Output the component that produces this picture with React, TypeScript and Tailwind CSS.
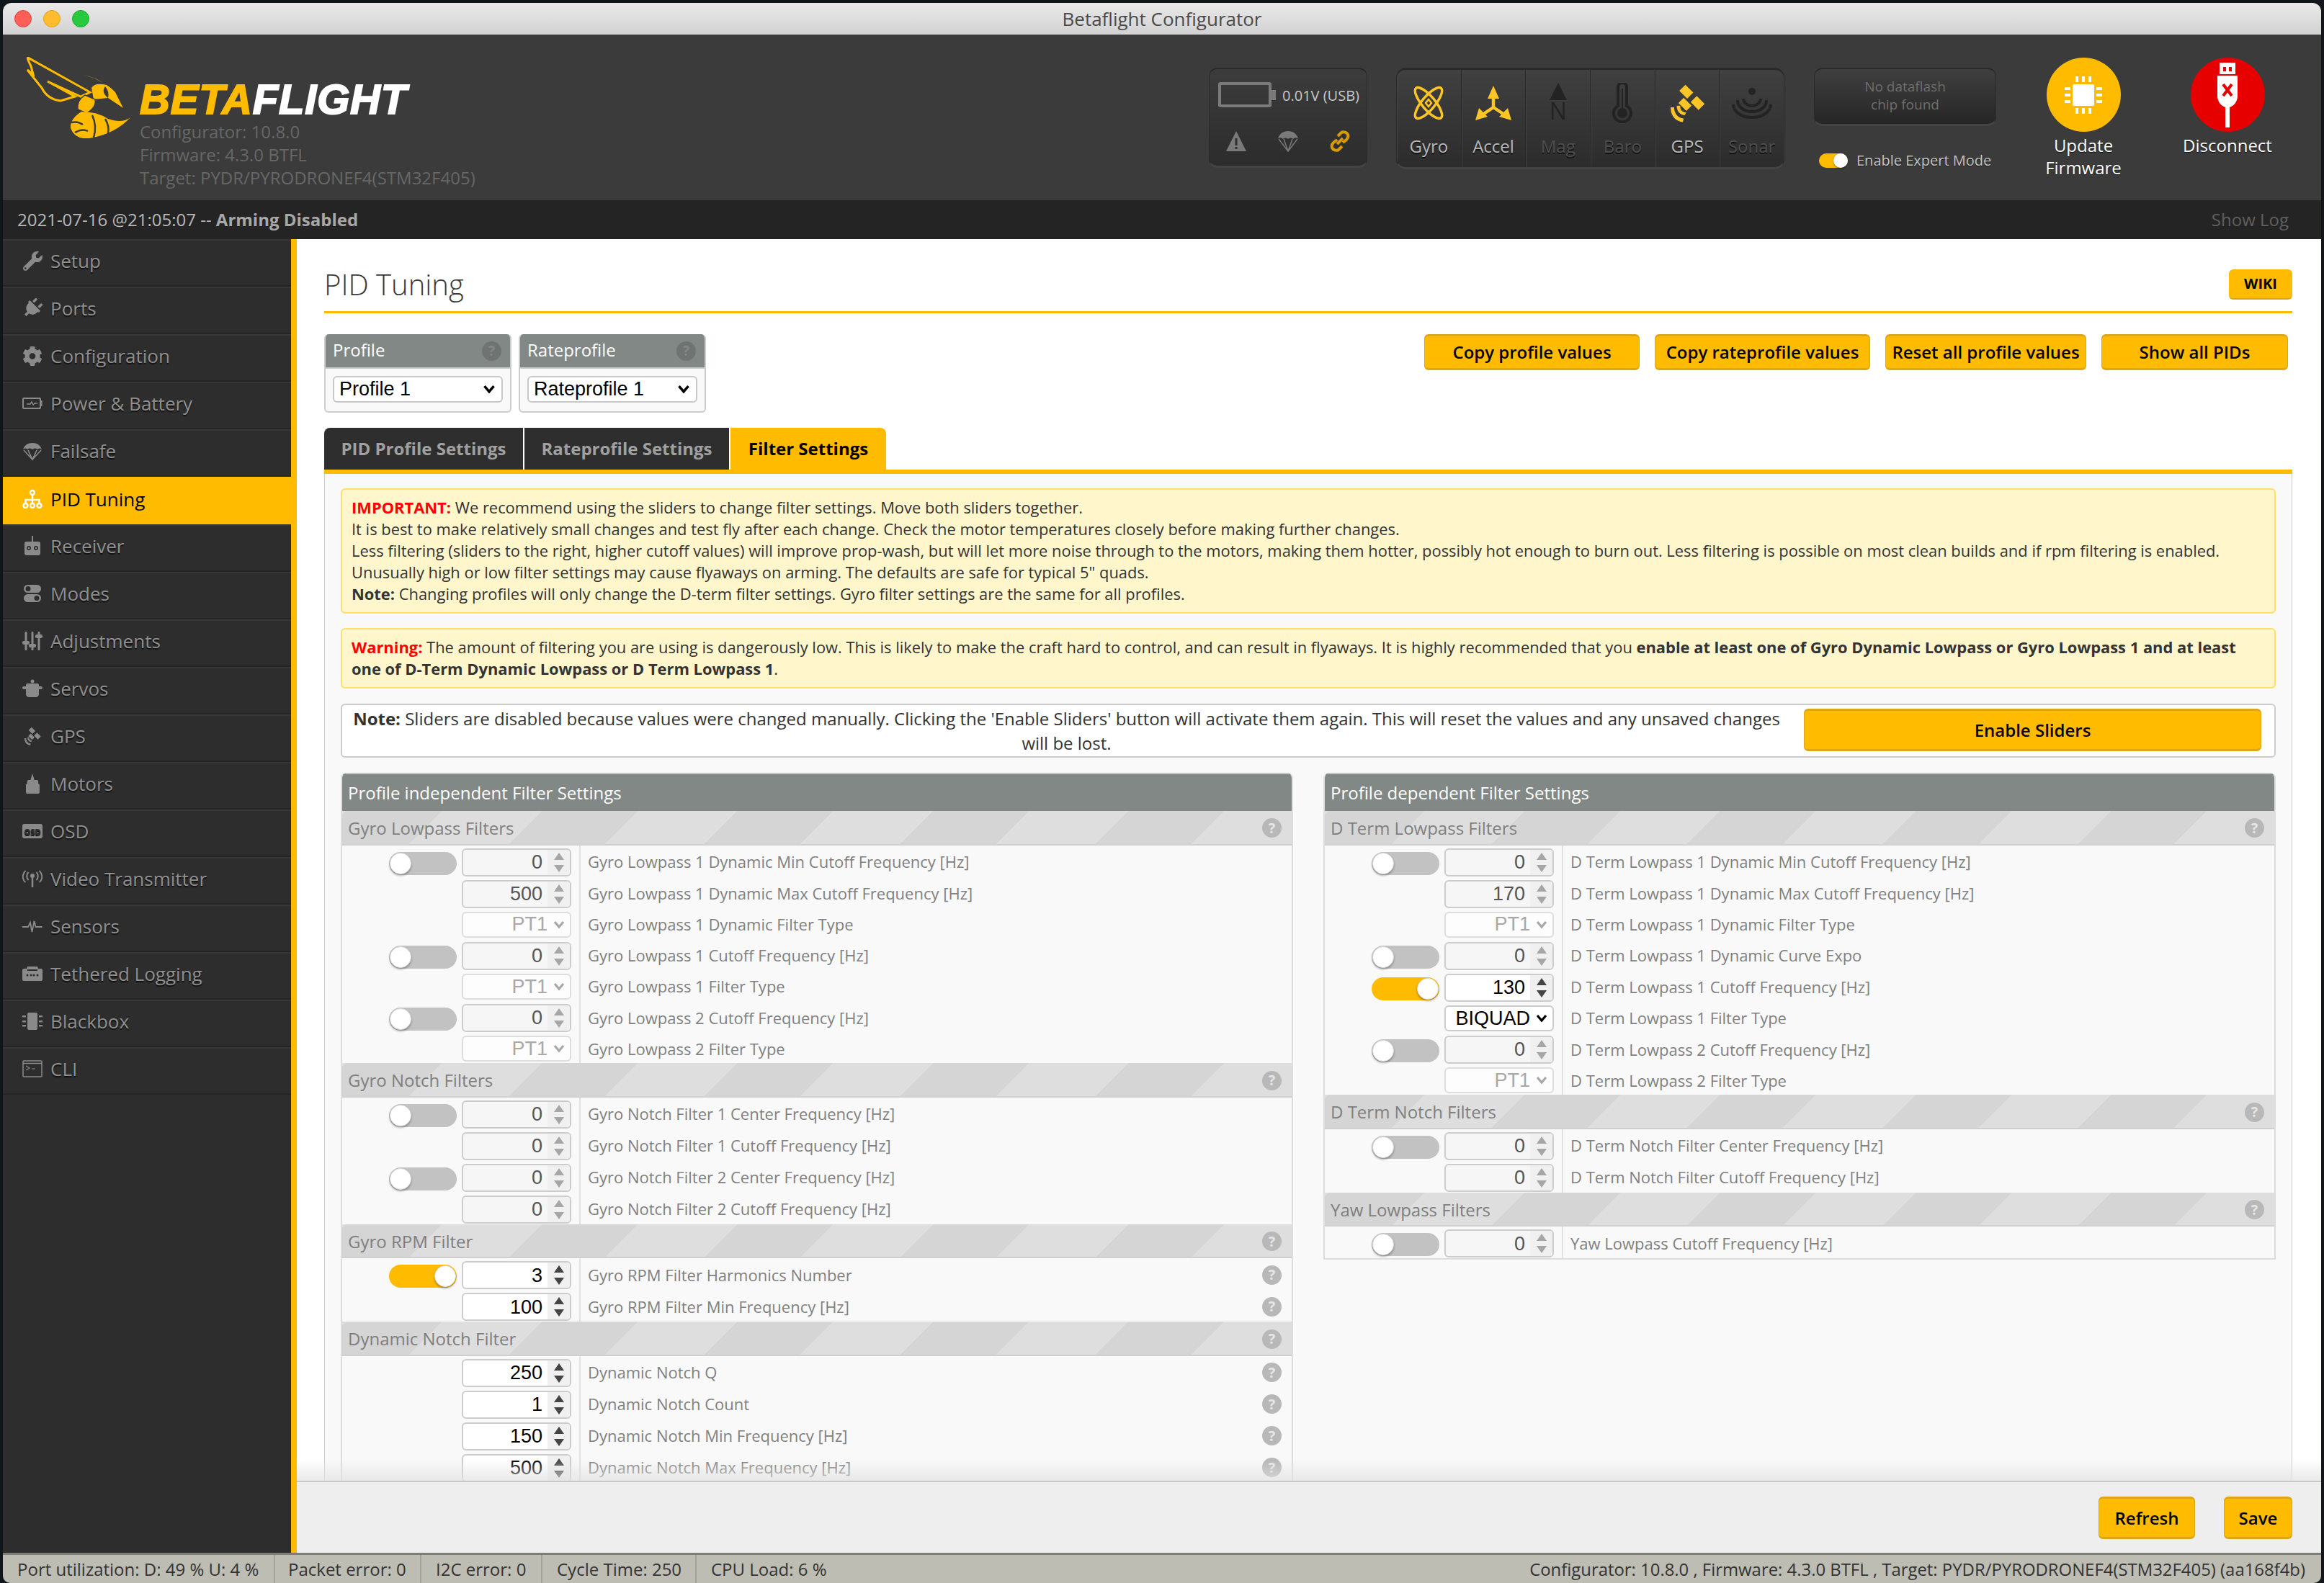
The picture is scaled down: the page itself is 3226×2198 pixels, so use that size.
import { FaWrench, FaPlug, FaCog } from "react-icons/fa";

type Row = {
  label: string;
  toggle?: "on" | "off";
  value?: string;
  select?: string;
  active?: boolean;
  help?: boolean;
};

type Section = { title: string; rows: Row[] };

const leftSections: Section[] = [
  {
    title: "Gyro Lowpass Filters",
    rows: [
      { label: "Gyro Lowpass 1 Dynamic Min Cutoff Frequency [Hz]", toggle: "off", value: "0" },
      { label: "Gyro Lowpass 1 Dynamic Max Cutoff Frequency [Hz]", value: "500" },
      { label: "Gyro Lowpass 1 Dynamic Filter Type", select: "PT1" },
      { label: "Gyro Lowpass 1 Cutoff Frequency [Hz]", toggle: "off", value: "0" },
      { label: "Gyro Lowpass 1 Filter Type", select: "PT1" },
      { label: "Gyro Lowpass 2 Cutoff Frequency [Hz]", toggle: "off", value: "0" },
      { label: "Gyro Lowpass 2 Filter Type", select: "PT1" },
    ],
  },
  {
    title: "Gyro Notch Filters",
    rows: [
      { label: "Gyro Notch Filter 1 Center Frequency [Hz]", toggle: "off", value: "0" },
      { label: "Gyro Notch Filter 1 Cutoff Frequency [Hz]", value: "0" },
      { label: "Gyro Notch Filter 2 Center Frequency [Hz]", toggle: "off", value: "0" },
      { label: "Gyro Notch Filter 2 Cutoff Frequency [Hz]", value: "0" },
    ],
  },
  {
    title: "Gyro RPM Filter",
    rows: [
      { label: "Gyro RPM Filter Harmonics Number", toggle: "on", value: "3", active: true, help: true },
      { label: "Gyro RPM Filter Min Frequency [Hz]", value: "100", active: true, help: true },
    ],
  },
  {
    title: "Dynamic Notch Filter",
    rows: [
      { label: "Dynamic Notch Q", value: "250", active: true, help: true },
      { label: "Dynamic Notch Count", value: "1", active: true, help: true },
      { label: "Dynamic Notch Min Frequency [Hz]", value: "150", active: true, help: true },
      { label: "Dynamic Notch Max Frequency [Hz]", value: "500", active: true, help: true },
    ],
  },
];

const rightSections: Section[] = [
  {
    title: "D Term Lowpass Filters",
    rows: [
      { label: "D Term Lowpass 1 Dynamic Min Cutoff Frequency [Hz]", toggle: "off", value: "0" },
      { label: "D Term Lowpass 1 Dynamic Max Cutoff Frequency [Hz]", value: "170" },
      { label: "D Term Lowpass 1 Dynamic Filter Type", select: "PT1" },
      { label: "D Term Lowpass 1 Dynamic Curve Expo", toggle: "off", value: "0" },
      { label: "D Term Lowpass 1 Cutoff Frequency [Hz]", toggle: "on", value: "130", active: true },
      { label: "D Term Lowpass 1 Filter Type", select: "BIQUAD", active: true },
      { label: "D Term Lowpass 2 Cutoff Frequency [Hz]", toggle: "off", value: "0" },
      { label: "D Term Lowpass 2 Filter Type", select: "PT1" },
    ],
  },
  {
    title: "D Term Notch Filters",
    rows: [
      { label: "D Term Notch Filter Center Frequency [Hz]", toggle: "off", value: "0" },
      { label: "D Term Notch Filter Cutoff Frequency [Hz]", value: "0" },
    ],
  },
  {
    title: "Yaw Lowpass Filters",
    rows: [{ label: "Yaw Lowpass Cutoff Frequency [Hz]", toggle: "off", value: "0" }],
  },
];

const SatelliteIcon = ({ className }: { className?: string }) => (
  <svg viewBox="0 0 48 48" className={className} fill="currentColor">
    <path d="M21 3l9 9-7 7-9-9zM34 16l9 9-7 7-9-9z" transform="translate(1 0)" />
    <path d="M20 18l9 9-6 6-9-9z" />
    <path d="M16 27c0 5 2 7 7 8l-2 3c-6-1-9-5-9-11z" />
    <path d="M9 29c0 7 4 12 11 13l-1 4C10 45 5 38 5 29z" />
  </svg>
);

const icons: Record<string, React.ReactNode> = {
  Setup: <FaWrench className="w-[27px] h-[27px]" />,
  Ports: <FaPlug className="w-[28px] h-[28px] rotate-45" />,
  Configuration: <FaCog className="w-[29px] h-[29px]" />,
  "Power & Battery": (
    <svg viewBox="0 0 28 28" className="w-[28px] h-[28px]" fill="none" stroke="currentColor">
      <rect x="1" y="7" width="24" height="14" strokeWidth="2" rx="1" />
      <rect x="25" y="10" width="2.5" height="8" fill="currentColor" stroke="none" />
      <path d="M6 15h5l2-3 2 4 2-2h4" strokeWidth="1.4" />
    </svg>
  ),
  Failsafe: (
    <svg viewBox="0 0 28 28" className="w-[28px] h-[28px]" fill="currentColor">
      <path d="M1 12C3 6 8 3 14 3s11 3 13 9c-2-2-4-2-6 0-2-2-4-2-7 0-3-2-5-2-7 0-2-2-4-2-6 0z" />
      <path d="M2 13l12 13L26 13M8 13l6 13 6-13" fill="none" stroke="currentColor" strokeWidth="1.6" />
    </svg>
  ),
  "PID Tuning": (
    <svg viewBox="0 0 28 28" className="w-[28px] h-[28px]" fill="none" stroke="currentColor" strokeWidth="2.4">
      <circle cx="14" cy="5" r="3" />
      <circle cx="4.5" cy="23" r="3" />
      <circle cx="14" cy="23" r="3" />
      <circle cx="23.5" cy="23" r="3" />
      <path d="M14 8v12M4.5 20v-5h19v5" />
    </svg>
  ),
  Receiver: (
    <svg viewBox="0 0 28 28" className="w-[28px] h-[28px]" fill="currentColor">
      <path d="M13 0h2v8h7a3 3 0 013 3v13a3 3 0 01-3 3H6a3 3 0 01-3-3V11a3 3 0 013-3h7z" />
      <circle cx="9" cy="17" r="3" fill="#2d2d2d" />
      <circle cx="19" cy="17" r="3" fill="#2d2d2d" />
      <circle cx="9" cy="17" r="1.3" />
      <circle cx="19" cy="17" r="1.3" />
    </svg>
  ),
  Modes: (
    <svg viewBox="0 0 28 28" className="w-[28px] h-[28px]" fill="currentColor">
      <rect x="2" y="2" width="24" height="11" rx="5.5" />
      <rect x="2" y="15" width="24" height="11" rx="5.5" />
      <circle cx="8" cy="7.5" r="3.5" fill="#2d2d2d" />
      <circle cx="20" cy="20.5" r="3.5" fill="#2d2d2d" />
    </svg>
  ),
  Adjustments: (
    <svg viewBox="0 0 28 28" className="w-[28px] h-[28px]" fill="currentColor">
      <rect x="3.5" y="1" width="3" height="26" rx="1" />
      <rect x="12.5" y="1" width="3" height="26" rx="1" />
      <rect x="21.5" y="1" width="3" height="26" rx="1" />
      <rect x="0" y="14" width="10" height="5" rx="2" />
      <rect x="9" y="18" width="10" height="5" rx="2" />
      <rect x="18" y="5" width="10" height="5" rx="2" />
    </svg>
  ),
  Servos: (
    <svg viewBox="0 0 28 28" className="w-[28px] h-[28px]" fill="currentColor">
      <rect x="0" y="11" width="28" height="4" rx="2" />
      <path d="M5 9c0-1 1-2 2-2h14c1 0 2 1 2 2v13c0 2-2 4-4 4H9c-2 0-4-2-4-4z" />
      <circle cx="14" cy="4" r="2.5" />
    </svg>
  ),
  GPS: <SatelliteIcon className="w-[28px] h-[28px]" />,
  Motors: (
    <svg viewBox="0 0 28 28" className="w-[28px] h-[28px]" fill="currentColor">
      <path d="M14 0l3 9h4a2 2 0 012 2v3l2 1v11a2 2 0 01-2 2H6a2 2 0 01-2-2V15l2-1v-3a2 2 0 012-2h3z" transform="translate(1.4 0) scale(0.9 1)" />
    </svg>
  ),
  OSD: (
    <svg viewBox="0 0 28 20" className="w-[28px] h-[20px]">
      <rect x="0" y="0" width="28" height="20" rx="3" fill="currentColor" />
      <text x="14" y="14.5" textAnchor="middle" fontSize="11" fontWeight="800" fill="#2d2d2d" fontFamily="Open Sans, sans-serif">
        OSD
      </text>
    </svg>
  ),
  "Video Transmitter": (
    <svg viewBox="0 0 28 28" className="w-[28px] h-[28px]" fill="none" stroke="currentColor" strokeWidth="2">
      <path d="M14 11v15" strokeWidth="2.6" />
      <circle cx="14" cy="10" r="3" fill="currentColor" stroke="none" />
      <path d="M8.5 5c-3 3-3 8 0 11M19.5 5c3 3 3 8 0 11M4.5 3c-5 5-5 12 0 16M23.5 3c5 5 5 12 0 16" />
    </svg>
  ),
  Sensors: (
    <svg viewBox="0 0 28 28" className="w-[28px] h-[28px]" fill="none" stroke="currentColor" strokeWidth="1.8">
      <path d="M0 15h8l3-6 2.5 13 3-15 2 8h9" />
    </svg>
  ),
  "Tethered Logging": (
    <svg viewBox="0 0 28 20" className="w-[28px] h-[20px]" fill="currentColor">
      <path d="M0 5a2 2 0 012-2h4l1-3h14l1 3h4a2 2 0 012 2v13a2 2 0 01-2 2H2a2 2 0 01-2-2z" />
      <rect x="7" y="4" width="14" height="2" fill="#2d2d2d" />
      <circle cx="7" cy="12" r="1.5" fill="#2d2d2d" />
      <circle cx="12" cy="12" r="1.5" fill="#2d2d2d" />
      <circle cx="16" cy="12" r="1.5" fill="#2d2d2d" />
      <circle cx="21" cy="12" r="1.5" fill="#2d2d2d" />
    </svg>
  ),
  Blackbox: (
    <svg viewBox="0 0 28 24" className="w-[28px] h-[24px]" fill="currentColor">
      <path d="M7 2a2 2 0 012-2h10a2 2 0 012 2v20a2 2 0 01-2 2H9a2 2 0 01-2-2z" />
      <rect x="0" y="4" width="5" height="2.4" />
      <rect x="0" y="11" width="5" height="2.4" />
      <rect x="0" y="17" width="5" height="2.4" />
      <rect x="23" y="4" width="5" height="2.4" />
      <rect x="23" y="11" width="5" height="2.4" />
      <rect x="23" y="17" width="5" height="2.4" />
    </svg>
  ),
  CLI: (
    <svg viewBox="0 0 28 24" className="w-[28px] h-[24px]" fill="none" stroke="currentColor" strokeWidth="1.5">
      <rect x="1" y="1" width="26" height="22" rx="1" />
      <path d="M1 4.5h26" />
      <path d="M5 8l5 3-5 3M13 12h5" strokeWidth="1.2" />
    </svg>
  ),
};

const navItems = [
  "Setup",
  "Ports",
  "Configuration",
  "Power & Battery",
  "Failsafe",
  "PID Tuning",
  "Receiver",
  "Modes",
  "Adjustments",
  "Servos",
  "GPS",
  "Motors",
  "OSD",
  "Video Transmitter",
  "Sensors",
  "Tethered Logging",
  "Blackbox",
  "CLI",
];

const Help = ({ dark }: { dark?: boolean }) => (
  <span
    className={`flex items-center justify-center w-[27px] h-[27px] rounded-full text-[20px] font-bold shrink-0 ${
      dark ? "bg-[#6f7371] text-[#828885]" : "bg-[#b8b8b8] text-[#e6e6e6]"
    }`}
  >
    ?
  </span>
);

const Chevron = ({ className }: { className?: string }) => (
  <svg viewBox="0 0 16 12" className={className} fill="none" stroke="currentColor" strokeWidth="3.2">
    <path d="M2 2l6 7 6-7" />
  </svg>
);

const Toggle = ({ on, small }: { on?: boolean; small?: boolean }) =>
  small ? (
    <div className="relative w-[40px] h-[20px] rounded-full bg-[#ffbb00]">
      <div className="absolute right-0 top-0 w-[20px] h-[20px] rounded-full bg-white shadow-[0_1px_2px_rgba(0,0,0,0.5)]" />
    </div>
  ) : (
    <div
      className={`flex items-center w-[94px] h-[32px] rounded-full px-[1px] ${
        on ? "bg-[#ffbb00] justify-end" : "bg-[#c2c2c2] justify-start"
      }`}
    >
      <div className="w-[30px] h-[30px] rounded-full bg-white border border-[#dcdcdc] shadow-[0_2px_3px_rgba(0,0,0,0.3)]" />
    </div>
  );

const NumberInput = ({ value, active }: { value: string; active?: boolean }) => (
  <div
    className={`flex w-[152px] h-[39px] rounded-[6px] border-2 border-[#cccccc] overflow-hidden font-['Liberation_Sans',sans-serif] ${
      active ? "bg-white text-black" : "bg-[#f6f6f6] text-[#555555]"
    }`}
  >
    <div className="flex-1 flex items-center justify-end pr-[7px] text-[27px]">{value}</div>
    <div className={`w-[31px] bg-[#f0f0f0] flex flex-col items-center justify-center gap-[7px] ${active ? "text-[#444444]" : "text-[#a6a6a6]"}`}>
      <svg viewBox="0 0 14 10" className="w-[14px] h-[10px]" fill="currentColor">
        <path d="M7 0l7 10H0z" />
      </svg>
      <svg viewBox="0 0 14 10" className="w-[14px] h-[10px]" fill="currentColor">
        <path d="M0 0h14L7 10z" />
      </svg>
    </div>
  </div>
);

const SelectBox = ({ value, active }: { value: string; active?: boolean }) => (
  <div
    className={`flex items-center justify-end gap-[8px] w-[152px] h-[36px] rounded-[6px] border-2 pr-[7px] font-['Liberation_Sans',sans-serif] text-[27px] ${
      active ? "bg-white text-black border-[#cccccc]" : "bg-[#fdfdfd] text-[#a8a8a8] border-[#dddddd]"
    }`}
  >
    <span>{value}</span>
    <Chevron className="w-[16px] h-[12px]" />
  </div>
);

const FilterRow = ({ row }: { row: Row }) => (
  <div className={`flex ${row.select ? "h-[42.33px]" : "h-[44px]"}`}>
    <div className="flex justify-end gap-[7px] w-[331px] pr-[11px] pt-[4px] border-r-2 border-[#e2e2e2] shrink-0">
      {row.toggle && (
        <div className="pt-[5px]">
          <Toggle on={row.toggle === "on"} />
        </div>
      )}
      {row.select ? <SelectBox value={row.select} active={row.active} /> : <NumberInput value={row.value ?? ""} active={row.active} />}
    </div>
    <div className="flex-1 flex items-center justify-between pl-[10px] pr-[14px] pt-[2px] text-[22px] text-[#808080]">
      <span>{row.label}</span>
      {row.help && <Help />}
    </div>
  </div>
);

const SubHeader = ({ title }: { title: string }) => (
  <div className="flex items-center justify-between h-[47.5px] pl-[8px] pr-[14px] pt-[2px] border-b-2 border-[#cfcfcf] text-[24px] text-[#7f7f7f] bg-[repeating-linear-gradient(135deg,#dedede_0px,#dedede_4px,#d5d5d5_4px,#d5d5d5_98px,#dedede_98px,#dedede_192px)]">
    <span>{title}</span>
    <Help />
  </div>
);

const FilterPanel = ({ title, sections }: { title: string; sections: Section[] }) => (
  <div className="rounded-t-[8px] overflow-hidden border-x-2 border-b-2 border-[#dddddd] bg-[#f9f9f9] self-start">
    <div className="flex items-center h-[53px] -mx-[2px] pl-[10px] bg-[#828885] border-t-2 border-[#c4c7c5] text-[24px] text-white">{title}</div>
    {sections.map((s) => (
      <div key={s.title}>
        <SubHeader title={s.title} />
        {s.rows.map((r) => (
          <FilterRow key={r.label} row={r} />
        ))}
      </div>
    ))}
  </div>
);

const ActionButton = ({ label, className }: { label: string; className: string }) => (
  <button className={`flex items-center justify-center rounded-[6px] bg-[#ffbb00] border border-[#dba718] border-y-[3px] font-semibold text-[24px] text-black ${className}`}>
    {label}
  </button>
);

const ProfileBox = ({ title, value, className }: { title: string; value: string; className: string }) => (
  <div className={`rounded-[6px] overflow-hidden border-2 border-t-0 border-[#cccccc] bg-[#f9f9f9] h-[109px] ${className}`}>
    <div className="flex items-center justify-between h-[46px] -mx-[2px] pl-[12px] pr-[14px] bg-[#828885] border-b-2 border-[#c8c8c8] box-content text-[24px] text-white">
      <span className="-mt-[3px]">{title}</span>
      <Help dark />
    </div>
    <div className="px-[10px] pt-[10px]">
      <div className="flex items-center justify-between h-[37px] rounded-[6px] border-2 border-[#c8c8c8] bg-white pl-[7px] pr-[8px] font-['Liberation_Sans',sans-serif] text-[27px] text-black">
        <span>{value}</span>
        <Chevron className="w-[18px] h-[13px]" />
      </div>
    </div>
  </div>
);

const Sensor = ({ label, on, children }: { label: string; on?: boolean; children: React.ReactNode }) => (
  <div className="flex-1 flex flex-col items-center border-r border-[#262626] last:border-r-0 shadow-[inset_1px_0_0_#444444]">
    <div className="h-[88px] flex items-center justify-center pt-[4px]">{children}</div>
    <span className={`text-[24px] [text-shadow:0_2px_0_#111111] ${on ? "text-[#b8b8b8]" : "text-[#4e4e4e]"}`}>{label}</span>
  </div>
);

const Wasp = () => (
  <svg viewBox="37 79 144 113" className="w-[144px] h-[113px] shrink-0">
    <path d="M37 79L125 128L112 134L66 113L104 134L84 140Q66 138 58 122L38 97L46 103L43 92Z" fill="none" stroke="#ffbb00" strokeWidth="3" strokeLinejoin="miter" />
    <path d="M116 104Q145 112 160 128L171 150L150 136Q152 127 146 120Q140 128 150 136L130 138L127 122Q132 114 148 118Q134 108 116 104Z" fill="#ffbb00" />
    <path d="M118 132Q106 140 108 152L120 157Q134 150 132 138Z" fill="#ffbb00" stroke="#3a3b3a" strokeWidth="1.5" />
    <path d="M113 155Q97 165 98 178Q104 194 124 192Q160 186 181 163Q170 172 150 165Q135 155 113 155Z" fill="#ffbb00" />
    <path d="M99 170Q108 168 115 173M104 184Q114 178 122 182M128 160Q135 175 130 191M146 165Q152 175 150 185" fill="none" stroke="#3a3b3a" strokeWidth="2.5" />
  </svg>
);

const App = () => {
  return (
    <div className="w-[3226px] h-[2198px] overflow-hidden bg-[#11151c] pt-[4px] px-[4px] font-['Open_Sans',sans-serif]">
      <div className="flex flex-col h-full rounded-t-[12px] rounded-b-[10px] overflow-hidden">
        {/* title bar */}
        <div className="flex items-center justify-center h-[44px] shrink-0 relative bg-[linear-gradient(#e9e9e9,#d2d2d2)] text-[26px] text-[#4a4a4a]">
          <div className="absolute left-[16px] top-[10px] flex gap-[16px]">
            <span className="w-[24px] h-[24px] rounded-full bg-[#ff5f57] border border-[#e0443e]" />
            <span className="w-[24px] h-[24px] rounded-full bg-[#ffbd2e] border border-[#dea123]" />
            <span className="w-[24px] h-[24px] rounded-full bg-[#27c93f] border border-[#1aab29]" />
          </div>
          Betaflight Configurator
        </div>

        {/* header */}
        <div className="flex h-[230px] shrink-0 bg-[#3a3b3a]">
          <div className="flex gap-[13px] pl-[33px] pt-[31px]">
            <Wasp />
            <div className="pt-[34px]">
              <div className="h-[50px] leading-[50px] font-['Liberation_Sans',sans-serif] font-bold italic text-[58px] tracking-[0.8px] [-webkit-text-stroke:2px_currentColor]">
                <span className="text-[#ffbb00]">BETA</span>
                <span className="text-white">FLIGHT</span>
              </div>
              <div className="pt-[4px] text-[24px] leading-[32px] text-[#676767]">
                <div>Configurator: 10.8.0</div>
                <div>Firmware: 4.3.0 BTFL</div>
                <div>Target: PYDR/PYRODRONEF4(STM32F405)</div>
              </div>
            </div>
          </div>

          <div className="ml-auto flex pr-[65px]">
            <div className="w-[220px] h-[139px] mt-[46px] rounded-[12px] border-t-[2px] border-b-[3px] border-x border-[#2a2a2a] border-b-[#444444] overflow-hidden bg-[linear-gradient(#3c3c3c,#2c2c2c)]">
              <div className="flex items-center h-[71px] pl-[12px] gap-[11px]">
                <div className="flex items-center">
                  <div className="w-[74px] h-[35px] rounded-[3px] border-[4px] border-[#7a7a7a]" />
                  <div className="w-[6px] h-[14px] bg-[#7a7a7a]" />
                </div>
                <span className="text-[20px] text-[#c8c8c8] whitespace-nowrap -ml-[2px] pt-[2px]">0.01V (USB)</span>
              </div>
              <div className="flex items-center justify-between pl-[22px] pr-[22px] pt-[14px]">
                <svg viewBox="0 0 30 30" className="w-[30px] h-[30px]">
                  <path d="M15 1l14 28H1z" fill="#7a7a7a" />
                  <path d="M13.5 11h3v10h-3zM13.5 23h3v3h-3z" fill="#2f2f2f" />
                </svg>
                <svg viewBox="0 0 30 30" className="w-[30px] h-[30px] text-[#7a7a7a]" fill="currentColor">
                  <path d="M1 11C3 5 8 1 15 1s12 4 14 10c-3-1-5-1-7 1-2-2-5-2-7 0-2-2-5-2-7 0-2-2-4-2-7-1z" />
                  <path d="M2 12l13 17 13-17M9 12l6 17 6-17" fill="none" stroke="currentColor" strokeWidth="1.5" />
                </svg>
                <svg viewBox="0 0 30 30" className="w-[30px] h-[30px]" fill="none" stroke="#d59b00" strokeWidth="4">
                  <path d="M12 8l5-5c3-2 8 0 9 3s0 5-2 7l-5 4M18 22l-5 5c-3 2-8 0-9-3s0-5 2-7l5-4M11 19l8-8" />
                </svg>
              </div>
            </div>

            <div className="flex w-[539px] h-[141px] mt-[46px] ml-[40px] rounded-[14px] border-t-[3px] border-b-[3px] border-x border-[#2a2a2a] border-b-[#444444] overflow-hidden bg-[linear-gradient(#404040,#2c2c2c)]">
              <Sensor label="Gyro" on>
                <svg viewBox="-1 -1 48 48" className="w-[48px] h-[48px]" fill="none" stroke="#ffc526" strokeWidth="3.5">
                  <ellipse cx="23" cy="23" rx="9" ry="27" transform="rotate(40 23 23)" />
                  <ellipse cx="23" cy="23" rx="9" ry="27" transform="rotate(-40 23 23)" />
                  <path d="M23 18l4 5-4 5-4-5z" strokeWidth="2.5" />
                </svg>
              </Sensor>
              <Sensor label="Accel" on>
                <svg viewBox="0 0 54 48" className="w-[54px] h-[48px]" fill="#ffc526">
                  <path d="M27 0l8 18H19z" />
                  <path d="M2 48l5-17 12 12zM52 48l-5-17-12 12z" />
                  <path d="M27 14v16L12 40M27 30l15 10" fill="none" stroke="#ffc526" strokeWidth="4.5" />
                </svg>
              </Sensor>
              <Sensor label="Mag">
                <div className="flex flex-col items-center text-[#232323]">
                  <svg viewBox="0 0 24 24" className="w-[24px] h-[24px]" fill="currentColor">
                    <path d="M12 0l12 24H0z" />
                  </svg>
                  <span className="text-[32px] leading-[34px] -mt-[2px]">N</span>
                </div>
              </Sensor>
              <Sensor label="Baro">
                <svg viewBox="0 0 30 56" className="w-[30px] h-[56px]" fill="none" stroke="#232323" strokeWidth="4">
                  <path d="M9 6a6 6 0 0112 0v26a12 12 0 11-12 0z" />
                  <circle cx="15" cy="42" r="5" fill="#232323" />
                  <path d="M15 8v30" strokeWidth="2" />
                </svg>
              </Sensor>
              <Sensor label="GPS" on>
                <SatelliteIcon className="w-[58px] h-[58px] text-[#ffc526]" />
              </Sensor>
              <Sensor label="Sonar">
                <svg viewBox="0 0 56 44" className="w-[56px] h-[44px]" fill="none" stroke="#232323" strokeWidth="4">
                  <circle cx="28" cy="6" r="5" fill="#232323" stroke="none" />
                  <path d="M16 16c0 5 5 10 12 10s12-5 12-10M8 18c0 9 8 16 20 16s20-7 20-16M2 24c0 10 11 18 26 18s26-8 26-18" />
                </svg>
              </Sensor>
            </div>

            <div className="w-[253px] ml-[41px] mt-[46px]">
              <div className="flex items-center justify-center h-[81px] pb-[2px] rounded-[12px] border-t-[2px] border-b-[3px] border-x border-[#2a2a2a] border-b-[#444444] bg-[linear-gradient(#3f3f3f,#262626)] text-center text-[19px] leading-[25px] text-[#6e6e6e]">
                <div>
                  No dataflash
                  <br />
                  chip found
                </div>
              </div>
              <div className="flex items-center gap-[12px] pl-[7px] pt-[33px]">
                <Toggle on small />
                <span className="text-[20px] text-[#c4c4c4] whitespace-nowrap [text-shadow:0_1px_0_#111111]">Enable Expert Mode</span>
              </div>
            </div>

            <div className="flex flex-col items-center w-[130px] ml-[56px] pt-[32px]">
              <div className="flex items-center justify-center w-[103px] h-[103px] rounded-full bg-[#ffbb00]">
                <svg viewBox="0 0 56 56" className="w-[56px] h-[56px]" fill="white">
                  <rect x="13" y="13" width="30" height="30" rx="2" />
                  <path d="M17 2h4v8h-4zM26 2h4v8h-4zM35 2h4v8h-4zM17 46h4v8h-4zM26 46h4v8h-4zM35 46h4v8h-4zM2 17h8v4H2zM2 26h8v4H2zM2 35h8v4H2zM46 17h8v4h-8zM46 26h8v4h-8zM46 35h8v4h-8z" />
                </svg>
              </div>
              <div className="pt-[3px] text-center text-[24px] leading-[31px] text-white [text-shadow:0_1px_1px_#111111]">
                Update
                <br />
                Firmware
              </div>
            </div>

            <div className="flex flex-col items-center w-[130px] ml-[70px] pt-[32px]">
              <div className="flex items-center justify-center w-[103px] h-[103px] rounded-full bg-[#e60000]">
                <svg viewBox="0 0 40 90" className="w-[40px] h-[90px]" fill="white">
                  <path d="M9 0h22v18h3v28c0 8-5 14-11 16v28h-6V62C11 60 6 54 6 46V18h3z" />
                  <rect x="14" y="6" width="4" height="6" fill="#e60000" />
                  <rect x="22" y="6" width="4" height="6" fill="#e60000" />
                  <rect x="9" y="16" width="22" height="2" fill="#e60000" />
                  <path d="M14 30l12 16M26 30L14 46" stroke="#e60000" strokeWidth="4" />
                </svg>
              </div>
              <div className="pt-[3px] text-center text-[24px] leading-[31px] text-white [text-shadow:0_1px_1px_#111111]">Disconnect</div>
            </div>
          </div>
        </div>

        {/* log bar */}
        <div className="flex items-center justify-between h-[54px] shrink-0 pl-[20px] pr-[45px] bg-[#242424] text-[24px] text-[#b8b8b8]">
          <span>
            2021-07-16 @21:05:07 -- <b className="font-bold text-[#a8a8a8]">Arming Disabled</b>
          </span>
          <span className="text-[#5f5f5f]">Show Log</span>
        </div>

        <div className="flex flex-1 min-h-0">
          {/* sidebar */}
          <div className="w-[408px] shrink-0 bg-[#2d2d2d] border-r-[8px] border-[#ffbb00]">
            {navItems.map((name) => {
              const active = name === "PID Tuning";
              return (
                <div
                  key={name}
                  className={`flex items-center gap-[11px] h-[66px] pl-[27px] pb-[4px] ${
                    active
                      ? "bg-[#ffbb00] text-black"
                      : "border-b-2 border-[#242424] shadow-[inset_0_2px_0_#383838] text-[#8f8f8f] [text-shadow:0_2px_1px_#111111]"
                  } ${name === "CLI" ? "border-b-0 h-[60px]" : ""}`}
                >
                  <span className={`flex items-center justify-center w-[28px] h-[28px] ${active ? "text-white" : "text-[#8a8a8a]"}`}>{icons[name]}</span>
                  <span className="text-[26px]">{name}</span>
                </div>
              );
            })}
          </div>

          {/* tab */}
          <div className="flex-1 min-w-0 flex flex-col bg-white">
            <div className="relative flex-1 min-h-0 overflow-hidden pl-[38px] pr-[40px]">
              <div className="flex items-end justify-between h-[103px] pb-[16px] border-b-[3px] border-[#ffbb00]">
                <h1 className="text-[40px] leading-[54px] font-light text-[#3a3a3a] -mb-[6px]">PID Tuning</h1>
                <button className="flex items-center justify-center w-[88px] h-[42px] rounded-[6px] bg-[#ffbb00] border-b-2 border-[#dba718] text-[20px] font-bold text-black">WIKI</button>
              </div>

              <div className="flex justify-between pt-[29px] pr-[6px]">
                <div className="flex gap-[10px]">
                  <ProfileBox title="Profile" value="Profile 1" className="w-[260px]" />
                  <ProfileBox title="Rateprofile" value="Rateprofile 1" className="w-[260px]" />
                </div>
                <div className="flex gap-[21px] h-[50px]">
                  <ActionButton label="Copy profile values" className="w-[299px]" />
                  <ActionButton label="Copy rateprofile values" className="w-[299px]" />
                  <ActionButton label="Reset all profile values" className="w-[279px]" />
                  <ActionButton label="Show all PIDs" className="w-[259px]" />
                </div>
              </div>

              <div className="flex items-end gap-[2px] mt-[21px] h-[64px] border-b-[6px] border-[#ffbb00] text-[24px] font-bold">
                <div className="flex items-center justify-center w-[276px] h-[58px] rounded-tl-[8px] bg-[#2e2e2e] text-[#a0a0a0]">PID Profile Settings</div>
                <div className="flex items-center justify-center w-[284px] h-[58px] bg-[#2e2e2e] text-[#a0a0a0]">Rateprofile Settings</div>
                <div className="flex items-center justify-center w-[216px] h-[58px] rounded-tr-[8px] bg-[#ffbb00] text-black">Filter Settings</div>
              </div>

              <div className="px-[22px] pt-[20px] bg-[#f9f9f9] border-x border-[#cccccc] h-[1500px]">
                <div className="h-[174px] rounded-[6px] border-2 border-[#ffe066] bg-[#fff6cc] px-[13px] pt-[10px] text-[21.9px] leading-[30px] text-[#333333]">
                  <b className="font-bold text-[#ff0000]">IMPORTANT:</b> We recommend using the sliders to change filter settings. Move both sliders together.
                  <br />
                  It is best to make relatively small changes and test fly after each change. Check the motor temperatures closely before making further changes.
                  <br />
                  Less filtering (sliders to the right, higher cutoff values) will improve prop-wash, but will let more noise through to the motors, making them hotter, possibly hot enough to burn out. Less filtering is possible on most clean builds and if rpm filtering is enabled.
                  <br />
                  Unusually high or low filter settings may cause flyaways on arming. The defaults are safe for typical 5" quads.
                  <br />
                  <b className="font-bold">Note:</b> Changing profiles will only change the D-term filter settings. Gyro filter settings are the same for all profiles.
                </div>

                <div className="h-[84px] mt-[20px] rounded-[6px] border-2 border-[#ffe066] bg-[#fff6cc] px-[13px] pt-[10px] text-[21.9px] leading-[30px] text-[#333333]">
                  <b className="font-bold text-[#ff0000]">Warning:</b> The amount of filtering you are using is dangerously low. This is likely to make the craft hard to control, and can result in flyaways. It is highly recommended that you{" "}
                  <b className="font-bold">enable at least one of Gyro Dynamic Lowpass or Gyro Lowpass 1 and at least one of D-Term Dynamic Lowpass or D Term Lowpass 1</b>.
                </div>

                <div className="flex h-[75px] mt-[21px] rounded-[6px] border-2 border-[#cccccc] bg-white pl-[14px] pr-[18px] pt-[5px]">
                  <div className="flex-1 -mt-[3px] text-center text-[24px] leading-[34px] text-[#333333] pr-[32px]">
                    <b className="font-bold">Note:</b> Sliders are disabled because values were changed manually. Clicking the 'Enable Sliders' button will activate them again. This will reset the values and any unsaved changes will be lost.
                  </div>
                  <ActionButton label="Enable Sliders" className="w-[635px] h-[59px] shrink-0" />
                </div>

                <div className="grid grid-cols-2 gap-[42px] mt-[21px]">
                  <FilterPanel title="Profile independent Filter Settings" sections={leftSections} />
                  <FilterPanel title="Profile dependent Filter Settings" sections={rightSections} />
                </div>
              </div>

              <div className="absolute inset-x-0 bottom-0 h-[30px] bg-[linear-gradient(transparent,rgba(225,225,225,0.7))]" />
            </div>

            <div className="flex justify-end gap-[40px] h-[100px] shrink-0 pt-[20px] pr-[40px] bg-[#eeeeee] border-t-2 border-[#c8c8c8]">
              <ActionButton label="Refresh" className="w-[134px] h-[59px]" />
              <ActionButton label="Save" className="w-[95px] h-[59px]" />
            </div>
          </div>
        </div>

        {/* status bar */}
        <div className="flex items-center h-[42px] shrink-0 bg-[#bdbdb4] border-t-[3px] border-[#7e7e76] text-[24px] text-[#333333]">
          <div className="flex h-full items-center pl-[20px] pr-[21px] w-[378px] border-r-2 border-[#a3a39b] whitespace-nowrap">Port utilization: D: 49 % U: 4 %</div>
          <div className="flex h-full items-center pl-[18px] w-[203px] border-r-2 border-[#a3a39b] whitespace-nowrap">Packet error: 0</div>
          <div className="flex h-full items-center pl-[20px] w-[168px] border-r-2 border-[#a3a39b] whitespace-nowrap">I2C error: 0</div>
          <div className="flex h-full items-center pl-[20px] w-[214px] border-r-2 border-[#a3a39b] whitespace-nowrap">Cycle Time: 250</div>
          <div className="flex h-full items-center pl-[20px] whitespace-nowrap">CPU Load: 6 %</div>
          <div className="ml-auto pr-[22px] whitespace-nowrap text-[23.9px]">Configurator: 10.8.0 , Firmware: 4.3.0 BTFL , Target: PYDR/PYRODRONEF4(STM32F405) (aa168f4b)</div>
        </div>
      </div>
    </div>
  );
};

export default App;
